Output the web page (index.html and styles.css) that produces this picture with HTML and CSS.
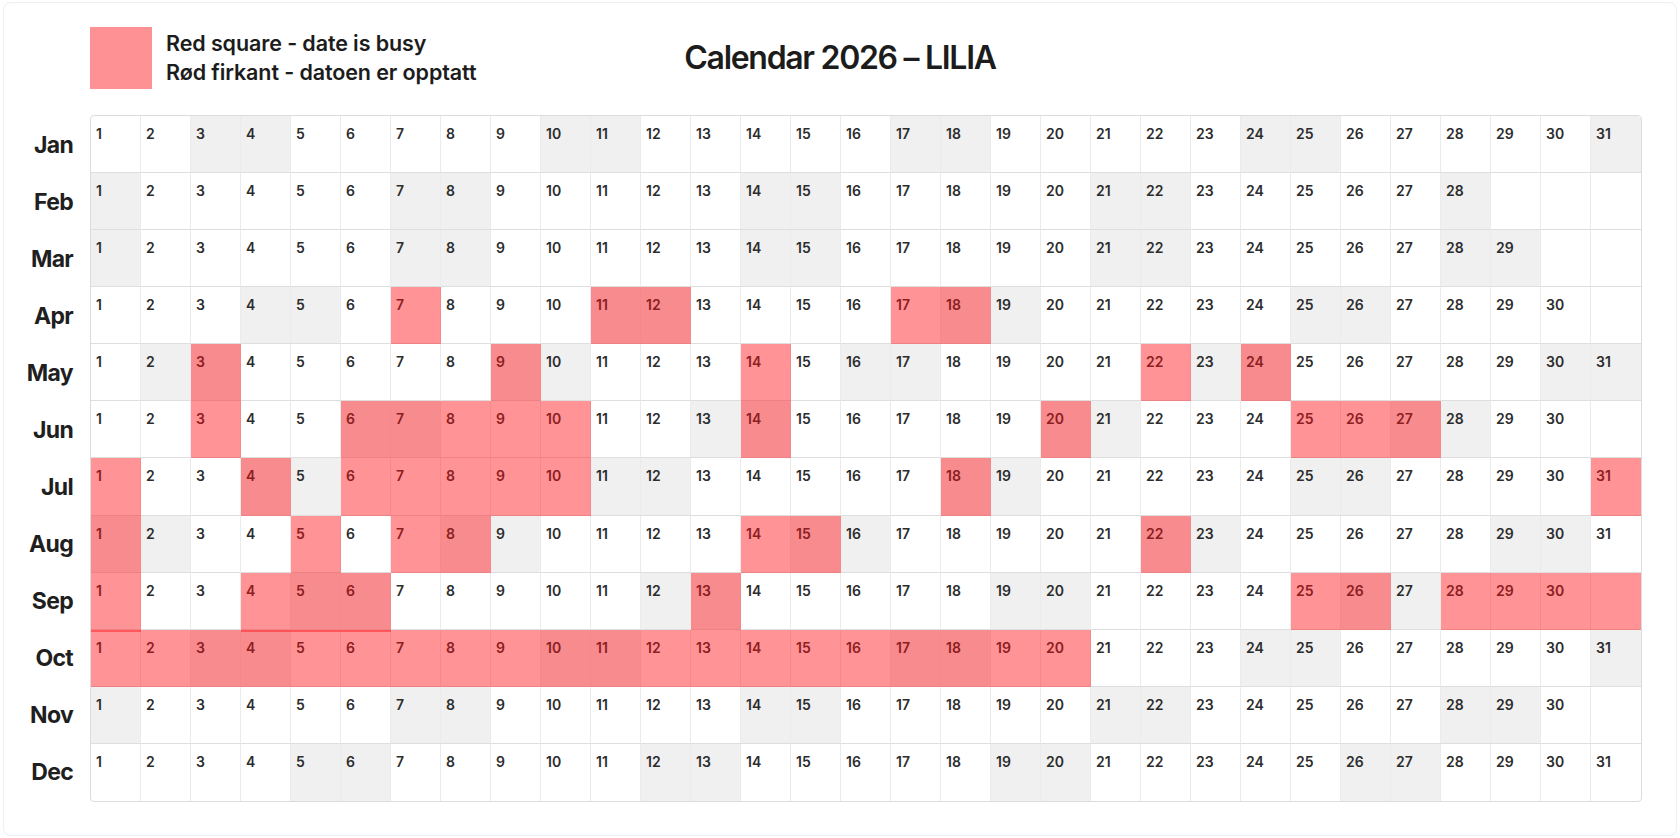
FILE: index.html
```html
<!DOCTYPE html>
<html lang="en">
<head>
<meta charset="utf-8">
<title>Calendar 2026 – LILIA</title>
<link rel="stylesheet" href="styles.css">
</head>
<body>
<div class="page">
  <header class="head">
    <div class="legend">
      <div class="swatch"></div>
      <div class="legend-text">
        <div>Red square - date is busy</div>
        <div>Rød firkant - datoen er opptatt</div>
      </div>
    </div>
    <h1 class="title">Calendar 2026 – LILIA</h1>
    <div></div>
  </header>

  <main class="cal">
    <div class="months">
      <div class="mon">Jan</div><div class="mon">Feb</div><div class="mon">Mar</div><div class="mon">Apr</div>
      <div class="mon">May</div><div class="mon">Jun</div><div class="mon">Jul</div><div class="mon">Aug</div>
      <div class="mon">Sep</div><div class="mon">Oct</div><div class="mon">Nov</div><div class="mon">Dec</div>
    </div>
    <div class="days">
      <!-- Jan -->
      <div class="d">1</div><div class="d">2</div><div class="d w">3</div><div class="d w">4</div><div class="d">5</div><div class="d">6</div><div class="d">7</div><div class="d">8</div><div class="d">9</div><div class="d w">10</div><div class="d w">11</div><div class="d">12</div><div class="d">13</div><div class="d">14</div><div class="d">15</div><div class="d">16</div><div class="d w">17</div><div class="d w">18</div><div class="d">19</div><div class="d">20</div><div class="d">21</div><div class="d">22</div><div class="d">23</div><div class="d w">24</div><div class="d w">25</div><div class="d">26</div><div class="d">27</div><div class="d">28</div><div class="d">29</div><div class="d">30</div><div class="d w">31</div>
      <!-- Feb -->
      <div class="d w">1</div><div class="d">2</div><div class="d">3</div><div class="d">4</div><div class="d">5</div><div class="d">6</div><div class="d w">7</div><div class="d w">8</div><div class="d">9</div><div class="d">10</div><div class="d">11</div><div class="d">12</div><div class="d">13</div><div class="d w">14</div><div class="d w">15</div><div class="d">16</div><div class="d">17</div><div class="d">18</div><div class="d">19</div><div class="d">20</div><div class="d w">21</div><div class="d w">22</div><div class="d">23</div><div class="d">24</div><div class="d">25</div><div class="d">26</div><div class="d">27</div><div class="d w">28</div><div class="d"></div><div class="d"></div><div class="d"></div>
      <!-- Mar -->
      <div class="d w">1</div><div class="d">2</div><div class="d">3</div><div class="d">4</div><div class="d">5</div><div class="d">6</div><div class="d w">7</div><div class="d w">8</div><div class="d">9</div><div class="d">10</div><div class="d">11</div><div class="d">12</div><div class="d">13</div><div class="d w">14</div><div class="d w">15</div><div class="d">16</div><div class="d">17</div><div class="d">18</div><div class="d">19</div><div class="d">20</div><div class="d w">21</div><div class="d w">22</div><div class="d">23</div><div class="d">24</div><div class="d">25</div><div class="d">26</div><div class="d">27</div><div class="d w">28</div><div class="d w">29</div><div class="d"></div><div class="d"></div>
      <!-- Apr -->
      <div class="d">1</div><div class="d">2</div><div class="d">3</div><div class="d w">4</div><div class="d w">5</div><div class="d">6</div><div class="d b">7</div><div class="d">8</div><div class="d">9</div><div class="d">10</div><div class="d w b">11</div><div class="d w b">12</div><div class="d">13</div><div class="d">14</div><div class="d">15</div><div class="d">16</div><div class="d b">17</div><div class="d w b">18</div><div class="d w">19</div><div class="d">20</div><div class="d">21</div><div class="d">22</div><div class="d">23</div><div class="d">24</div><div class="d w">25</div><div class="d w">26</div><div class="d">27</div><div class="d">28</div><div class="d">29</div><div class="d">30</div><div class="d"></div>
      <!-- May -->
      <div class="d">1</div><div class="d w">2</div><div class="d w b">3</div><div class="d">4</div><div class="d">5</div><div class="d">6</div><div class="d">7</div><div class="d">8</div><div class="d w b">9</div><div class="d w">10</div><div class="d">11</div><div class="d">12</div><div class="d">13</div><div class="d b">14</div><div class="d">15</div><div class="d w">16</div><div class="d w">17</div><div class="d">18</div><div class="d">19</div><div class="d">20</div><div class="d">21</div><div class="d b">22</div><div class="d w">23</div><div class="d w b">24</div><div class="d">25</div><div class="d">26</div><div class="d">27</div><div class="d">28</div><div class="d">29</div><div class="d w">30</div><div class="d w">31</div>
      <!-- Jun -->
      <div class="d">1</div><div class="d">2</div><div class="d b">3</div><div class="d">4</div><div class="d">5</div><div class="d w b">6</div><div class="d w b">7</div><div class="d b">8</div><div class="d b">9</div><div class="d b">10</div><div class="d">11</div><div class="d">12</div><div class="d w">13</div><div class="d w b">14</div><div class="d">15</div><div class="d">16</div><div class="d">17</div><div class="d">18</div><div class="d">19</div><div class="d w b">20</div><div class="d w">21</div><div class="d">22</div><div class="d">23</div><div class="d">24</div><div class="d b">25</div><div class="d b">26</div><div class="d w b">27</div><div class="d w">28</div><div class="d">29</div><div class="d">30</div><div class="d"></div>
      <!-- Jul -->
      <div class="d b">1</div><div class="d">2</div><div class="d">3</div><div class="d w b">4</div><div class="d w">5</div><div class="d b">6</div><div class="d b">7</div><div class="d b">8</div><div class="d b">9</div><div class="d b">10</div><div class="d w">11</div><div class="d w">12</div><div class="d">13</div><div class="d">14</div><div class="d">15</div><div class="d">16</div><div class="d">17</div><div class="d w b">18</div><div class="d w">19</div><div class="d">20</div><div class="d">21</div><div class="d">22</div><div class="d">23</div><div class="d">24</div><div class="d w">25</div><div class="d w">26</div><div class="d">27</div><div class="d">28</div><div class="d">29</div><div class="d">30</div><div class="d b">31</div>
      <!-- Aug -->
      <div class="d w b">1</div><div class="d w">2</div><div class="d">3</div><div class="d">4</div><div class="d b">5</div><div class="d">6</div><div class="d b">7</div><div class="d w b">8</div><div class="d w">9</div><div class="d">10</div><div class="d">11</div><div class="d">12</div><div class="d">13</div><div class="d b">14</div><div class="d w b">15</div><div class="d w">16</div><div class="d">17</div><div class="d">18</div><div class="d">19</div><div class="d">20</div><div class="d">21</div><div class="d w b">22</div><div class="d w">23</div><div class="d">24</div><div class="d">25</div><div class="d">26</div><div class="d">27</div><div class="d">28</div><div class="d w">29</div><div class="d w">30</div><div class="d">31</div>
      <!-- Sep -->
      <div class="d b x">1</div><div class="d">2</div><div class="d">3</div><div class="d b x">4</div><div class="d w b x">5</div><div class="d w b x">6</div><div class="d">7</div><div class="d">8</div><div class="d">9</div><div class="d">10</div><div class="d">11</div><div class="d w">12</div><div class="d w b">13</div><div class="d">14</div><div class="d">15</div><div class="d">16</div><div class="d">17</div><div class="d">18</div><div class="d w">19</div><div class="d w">20</div><div class="d">21</div><div class="d">22</div><div class="d">23</div><div class="d">24</div><div class="d b">25</div><div class="d w b">26</div><div class="d w">27</div><div class="d b">28</div><div class="d b">29</div><div class="d b">30</div><div class="d b"></div>
      <!-- Oct -->
      <div class="d b">1</div><div class="d b">2</div><div class="d w b">3</div><div class="d w b">4</div><div class="d b">5</div><div class="d b">6</div><div class="d b">7</div><div class="d b">8</div><div class="d b">9</div><div class="d w b">10</div><div class="d w b">11</div><div class="d b">12</div><div class="d b">13</div><div class="d b">14</div><div class="d b">15</div><div class="d b">16</div><div class="d w b">17</div><div class="d w b">18</div><div class="d b">19</div><div class="d b">20</div><div class="d">21</div><div class="d">22</div><div class="d">23</div><div class="d w">24</div><div class="d w">25</div><div class="d">26</div><div class="d">27</div><div class="d">28</div><div class="d">29</div><div class="d">30</div><div class="d w">31</div>
      <!-- Nov -->
      <div class="d w">1</div><div class="d">2</div><div class="d">3</div><div class="d">4</div><div class="d">5</div><div class="d">6</div><div class="d w">7</div><div class="d w">8</div><div class="d">9</div><div class="d">10</div><div class="d">11</div><div class="d">12</div><div class="d">13</div><div class="d w">14</div><div class="d w">15</div><div class="d">16</div><div class="d">17</div><div class="d">18</div><div class="d">19</div><div class="d">20</div><div class="d w">21</div><div class="d w">22</div><div class="d">23</div><div class="d">24</div><div class="d">25</div><div class="d">26</div><div class="d">27</div><div class="d w">28</div><div class="d w">29</div><div class="d">30</div><div class="d"></div>
      <!-- Dec -->
      <div class="d">1</div><div class="d">2</div><div class="d">3</div><div class="d">4</div><div class="d w">5</div><div class="d w">6</div><div class="d">7</div><div class="d">8</div><div class="d">9</div><div class="d">10</div><div class="d">11</div><div class="d w">12</div><div class="d w">13</div><div class="d">14</div><div class="d">15</div><div class="d">16</div><div class="d">17</div><div class="d">18</div><div class="d w">19</div><div class="d w">20</div><div class="d">21</div><div class="d">22</div><div class="d">23</div><div class="d">24</div><div class="d">25</div><div class="d w">26</div><div class="d w">27</div><div class="d">28</div><div class="d">29</div><div class="d">30</div><div class="d">31</div>
    </div>
  </main>
</div>
</body>
</html>
```

FILE: styles.css
```css
* { box-sizing: border-box; }

html, body {
  margin: 0;
  background: #ffffff;
}

body {
  font-family: Inter, "Noto Sans", "Liberation Sans", sans-serif;
  color: #1c1c1c;
}

.page {
  margin: 2px 3px;
  height: 834px;
  border: 1px solid #efefef;
  border-radius: 8px;
}

.head {
  display: grid;
  grid-template-columns: 1fr auto 1fr;
  padding-top: 24px;
  height: 86px;
}

.legend {
  display: flex;
  align-items: flex-start;
  gap: 14px;
  padding-left: 86px;
}

.swatch {
  width: 62px;
  height: 62px;
  background: #fd9194;
  flex: none;
}

.legend-text {
  margin-top: 2px;
  font-size: 21.5px;
  font-weight: 600;
  line-height: 29px;
  letter-spacing: -0.1px;
  white-space: nowrap;
}

.title {
  margin: 15px 0 0;
  font-size: 32px;
  line-height: 32px;
  font-weight: 600;
  letter-spacing: -1.3px;
  white-space: nowrap;
}

.cal {
  display: grid;
  grid-template-columns: 86px 1552px;
  margin-top: 26px;
}

.months {
  display: grid;
  grid-template-rows: repeat(12, 1fr);
  padding: 1px 0;
}

.mon {
  display: flex;
  align-items: center;
  justify-content: flex-end;
  padding-right: 17px;
  font-size: 23px;
  font-weight: 700;
  letter-spacing: -0.7px;
  color: #1f1f1f;
}

.days {
  display: grid;
  grid-template-columns: repeat(31, 1fr);
  grid-template-rows: repeat(12, 1fr);
  height: 687px;
  border: 1px solid #dcdcdc;
  border-radius: 4px;
  overflow: hidden;
}

.d {
  position: relative;
  border-right: 1px solid #ebebeb;
  border-bottom: 1px solid #dedede;
  padding: 10px 0 0 5px;
  font-size: 14px;
  line-height: 16px;
  font-weight: 600;
  color: #2c2c2c;
}

.d:nth-child(31n) { border-right: 0; }
.d:nth-last-child(-n+31) { border-bottom: 0; }

.w { background: #f0f0f0; }

.b::after {
  content: "";
  position: absolute;
  top: 0;
  left: 0;
  right: -1px;
  bottom: -1px;
  background: rgba(255, 15, 20, 0.45);
}

.x::after {
  bottom: -3px;
  z-index: 1;
}
```
